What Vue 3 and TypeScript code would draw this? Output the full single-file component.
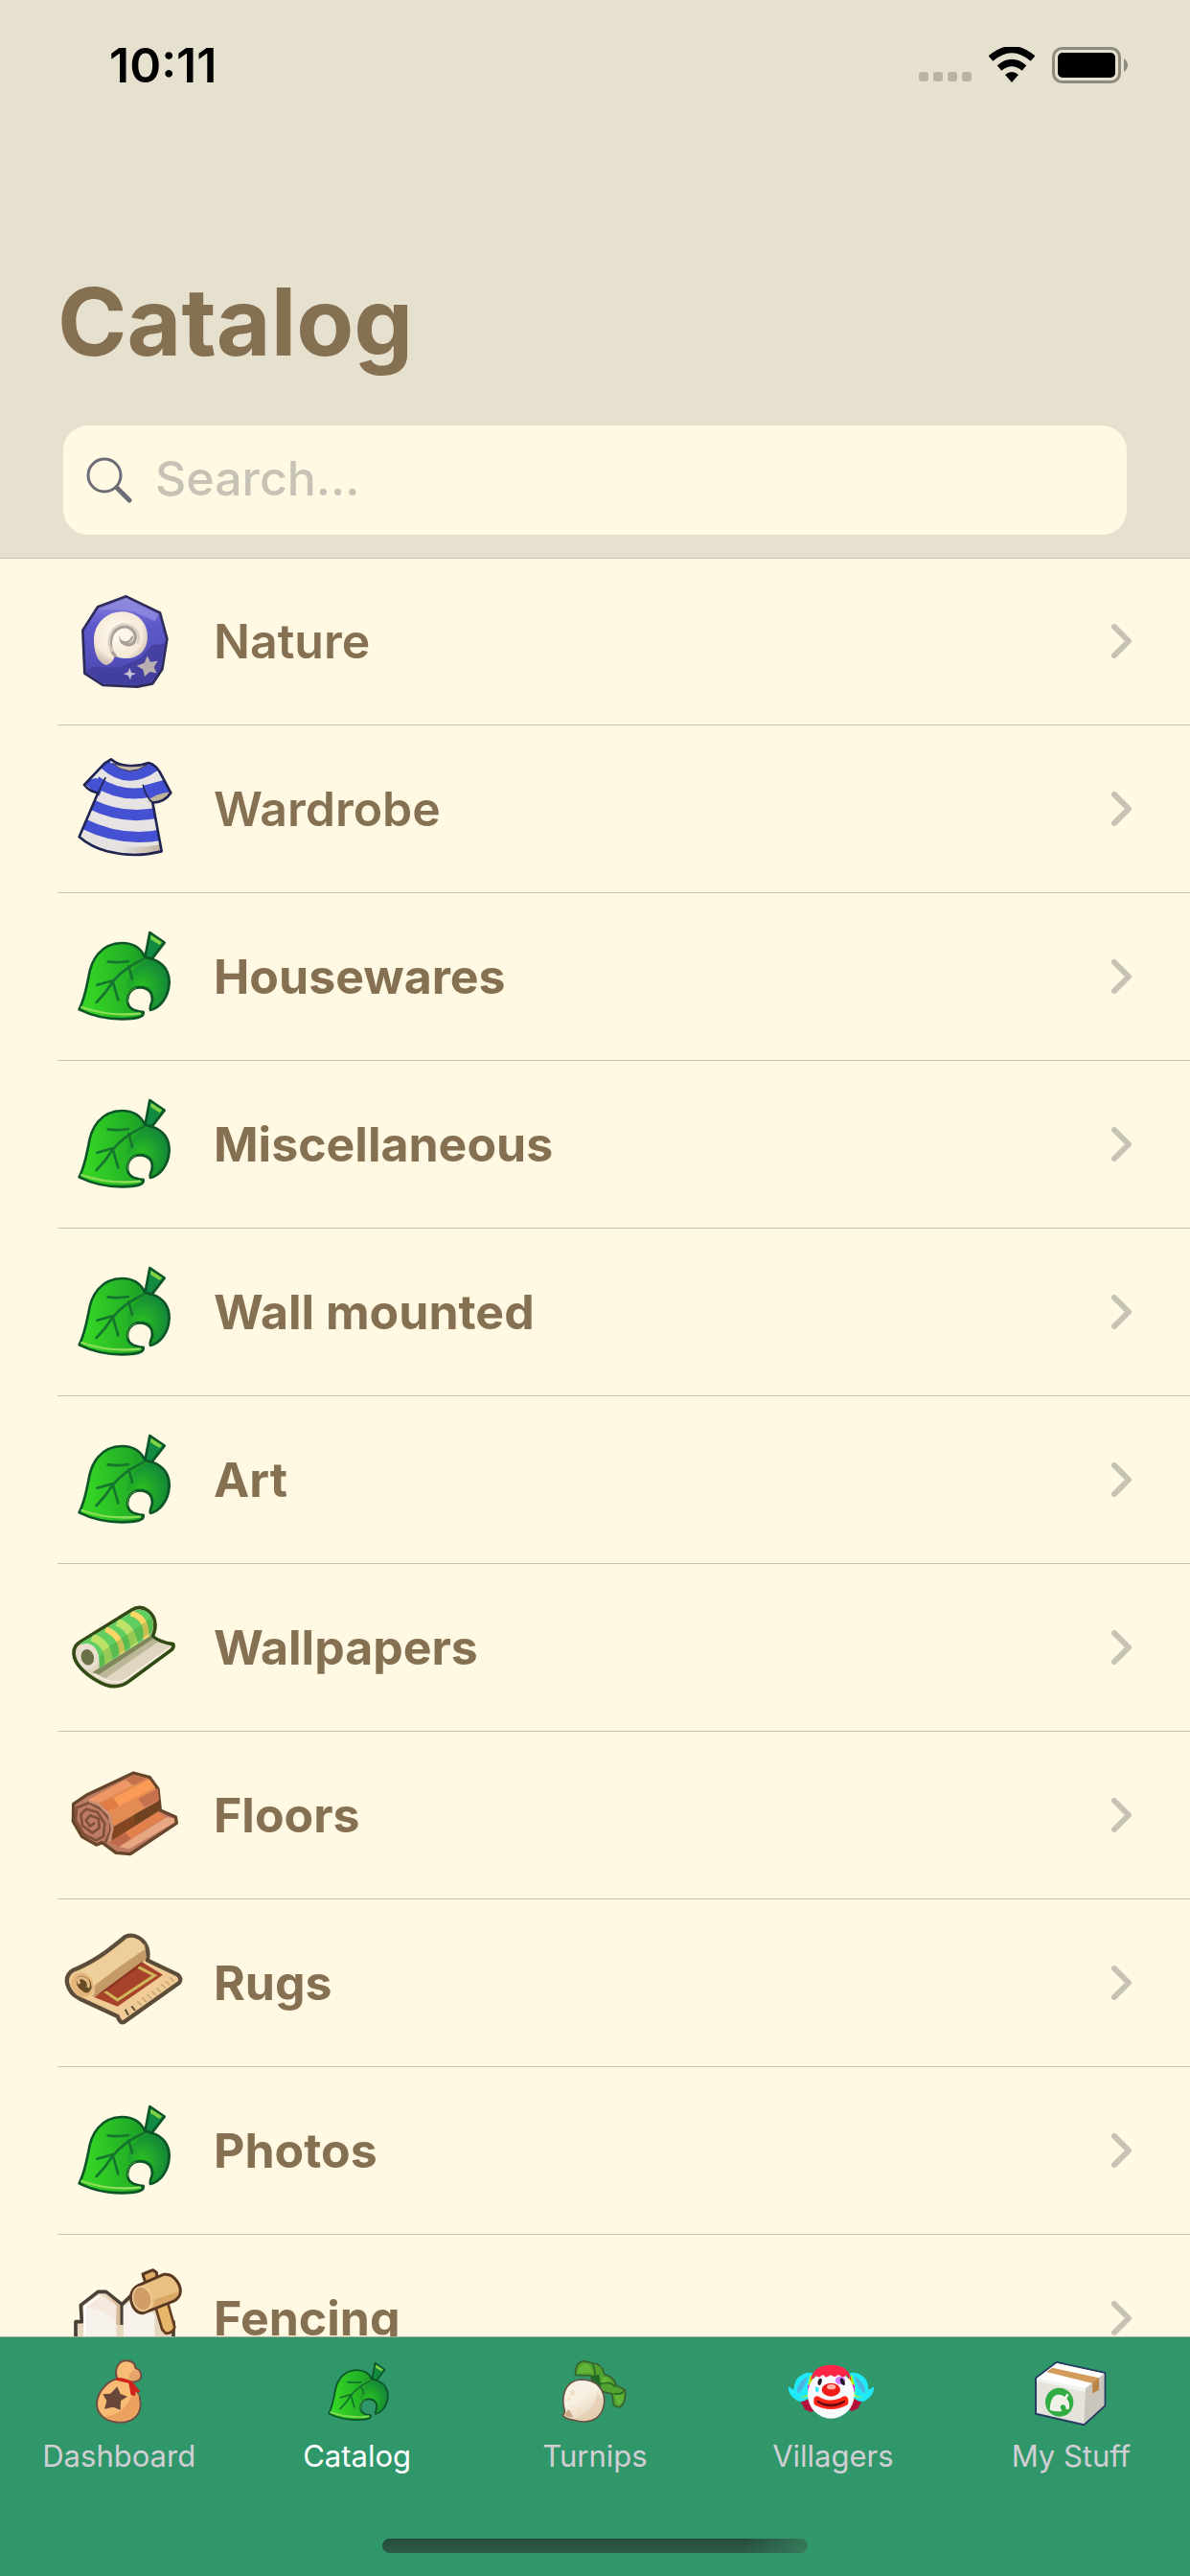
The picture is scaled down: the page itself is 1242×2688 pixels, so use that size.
<script setup lang="ts">
import { ref } from 'vue'

interface Category {
  name: string
  icon: string
  strong: boolean
}

interface Tab {
  name: string
  icon: string
}

const categories: Category[] = [
  { name: 'Nature', icon: 'fossil', strong: false },
  { name: 'Wardrobe', icon: 'dress', strong: false },
  { name: 'Housewares', icon: 'leaf', strong: true },
  { name: 'Miscellaneous', icon: 'leaf', strong: true },
  { name: 'Wall mounted', icon: 'leaf', strong: true },
  { name: 'Art', icon: 'leaf', strong: true },
  { name: 'Wallpapers', icon: 'wallpaper', strong: true },
  { name: 'Floors', icon: 'floor', strong: true },
  { name: 'Rugs', icon: 'rug', strong: true },
  { name: 'Photos', icon: 'leaf', strong: true },
  { name: 'Fencing', icon: 'fence', strong: true },
]

const tabs: Tab[] = [
  { name: 'Dashboard', icon: 'bag' },
  { name: 'Catalog', icon: 'leaf-small' },
  { name: 'Turnips', icon: 'turnip' },
  { name: 'Villagers', icon: 'clown' },
  { name: 'My Stuff', icon: 'box' },
]

const query = ref('')
const active = ref('Catalog')
</script>

<template>
  <div class="screen">
    <svg class="sprite" aria-hidden="true">
      <defs>
        <linearGradient id="g-fossil" x1="0" y1="0" x2="0" y2="1">
          <stop offset="0" stop-color="#8f8be0" />
          <stop offset="0.3" stop-color="#5f5acb" />
          <stop offset="1" stop-color="#4a46ad" />
        </linearGradient>
        <radialGradient id="g-shell" cx="0.45" cy="0.4" r="0.6">
          <stop offset="0" stop-color="#fffaf0" />
          <stop offset="0.75" stop-color="#f6ead8" />
          <stop offset="1" stop-color="#cfc0b4" />
        </radialGradient>
        <linearGradient id="g-leaf" x1="0.1" y1="0.5" x2="1" y2="0.4">
          <stop offset="0" stop-color="#35d325" />
          <stop offset="0.55" stop-color="#22ae26" />
          <stop offset="1" stop-color="#137a30" />
        </linearGradient>
        <radialGradient id="g-lobe" cx="0.35" cy="0.6" r="0.7">
          <stop offset="0" stop-color="#2cc320" />
          <stop offset="1" stop-color="#13853a" />
        </radialGradient>
        <linearGradient id="g-hem" x1="0" y1="0" x2="1" y2="0">
          <stop offset="0.5" stop-color="#e6e2df" />
          <stop offset="1" stop-color="#bcae98" />
        </linearGradient>
        <linearGradient id="g-turnip" x1="0.2" y1="0" x2="0.8" y2="1">
          <stop offset="0.4" stop-color="#f8f0e2" />
          <stop offset="1" stop-color="#e3cdb0" />
        </linearGradient>
        <clipPath id="c-dress">
          <path d="M228 607C255 632 310 632 345 618Q370 622 390 665L415 712Q395 742 358 743L386 895Q300 917 215 895Q165 882 128 850L187 712Q160 708 144 687L208 619Z" />
        </clipPath>
        <clipPath id="c-roll">
          <path d="M100 225L265 125Q300 110 320 135Q340 165 320 200L160 302Q170 240 100 225Z" />
        </clipPath>

        <g id="leaf-art">
          <path d="M304 178L319 99L365 131L326 181Z" fill="#128a41" stroke="#0c5527" stroke-width="8" stroke-linejoin="round" />
          <path d="M323 107L358 130L350 138L321 120Z" fill="#7ed344" />
          <path d="M98 340C115 305 120 275 127 240C135 185 165 133 232 132C270 132 292 150 304 176L325 182C362 192 381 222 380 258C377 305 350 335 321 342C318 335 321 328 325 318C332 290 315 271 288 271C262 271 245 294 250 320C256 343 278 345 299 348C301 359 290 366 270 368C205 375 145 363 98 340Z" fill="url(#g-leaf)" stroke="#0c5527" stroke-width="8" stroke-linejoin="round" />
          <path d="M262 225C285 195 305 188 326 187C357 197 375 224 375 257C373 290 355 320 332 332C341 300 330 262 285 264C270 265 260 268 252 276C242 258 255 240 262 225Z" fill="url(#g-lobe)" />
          <path d="M152 318Q180 290 202 255Q235 212 300 182M188 190Q220 195 252 189M154 263L202 250M204 255L220 310M253 205L264 245" fill="none" stroke="#15742d" stroke-width="8" stroke-linecap="round" />
          <path d="M106 333Q190 363 288 353" fill="none" stroke="#8ddd58" stroke-width="7" stroke-linecap="round" />
          <path d="M250 320Q244 284 276 272" fill="none" stroke="#74c44c" stroke-width="2" />
        </g>

        <symbol id="leaf" viewBox="39 39 396 396"><use href="#leaf-art" /></symbol>
        <symbol id="leaf-small" viewBox="15 77 439 329"><use href="#leaf-art" /></symbol>

        <symbol id="fossil" viewBox="69 39 396 396">
          <path d="M275 97L381 148L403 230L388 325L358 370L310 380L202 375L145 338L139 203L186 130Z" fill="url(#g-fossil)" stroke="#2d2b58" stroke-width="8" stroke-linejoin="round" />
          <path d="M275 104L375 152L366 175L300 145L245 138L190 138Z" fill="#8e8ade" opacity=".8" />
          <path d="M355 250L397 245L383 322L355 364L310 373L204 368L150 333L170 318L250 320L320 290Z" fill="#403c9a" opacity=".75" />
          <path d="M212 312C183 303 174 268 174 235C174 180 215 145 263 145C315 147 343 183 342 225C340 270 310 292 275 291C255 291 247 287 240 282Q233 309 212 312Z" fill="url(#g-shell)" />
          <path d="M240 282C218 260 220 208 258 193C292 185 313 215 300 240C285 256 258 248 258 225" fill="none" stroke="#aaa09a" stroke-width="10" stroke-linecap="round" />
          <path d="M232 270C212 245 220 195 262 184C300 182 325 215 310 246" fill="none" stroke="#dcd0c3" stroke-width="7" />
          <circle cx="272" cy="222" r="17" fill="#fbf5ea" />
          <path d="M262 238Q285 248 294 225" fill="none" stroke="#aaa09a" stroke-width="7" stroke-linecap="round" />
          <path d="M341 283L351 302L374 299L362 318L370 337L349 333L333 348L328 326L308 314L332 305Z" fill="#b9afb0" />
          <path d="M286 320L291 335L306 339L292 344L288 358L281 344L267 340L281 334Z" fill="#c9c2d0" />
        </symbol>

        <symbol id="dress" viewBox="69 564 396 396">
          <g clip-path="url(#c-dress)">
            <path d="M110 590H430V930H110Z" fill="#e7e3e2" />
            <path d="M120 830Q250 905 400 870V920H110Z" fill="url(#g-hem)" />
            <path d="M205 620Q280 690 365 628M180 675Q280 745 410 690M160 745Q270 800 380 773M140 808Q260 868 390 843" fill="none" stroke="#4551d3" stroke-width="33" />
            <path d="M140 678L180 665L205 690L190 722ZM327 690L392 672L425 705L350 730Z" fill="#4551d3" />
            <path d="M343 738Q365 712 415 710L395 738L358 748Z" fill="#c0b49d" />
          </g>
          <path d="M228 607C255 632 310 632 345 618Q370 622 390 665L415 712Q395 742 358 743L386 895Q300 917 215 895Q165 882 128 850L187 712Q160 708 144 687L208 619Z" fill="none" stroke="#202451" stroke-width="8" stroke-linejoin="round" />
          <path d="M232 620Q285 665 340 624Q285 637 232 620Z" fill="#c9bca8" stroke="#30305a" stroke-width="3" />
          <path d="M210 665L187 712M328 688Q335 722 358 743" fill="none" stroke="#202451" stroke-width="5" stroke-linecap="round" />
        </symbol>

        <symbol id="wallpaper" viewBox="39 39 396 396">
          <path d="M100 221L262 120C298 98 335 130 336 166Q336 188 327 202Q350 220 392 227Q396 234 388 244L258 340C225 366 190 364 155 342C120 322 82 290 81 256Q80 232 100 221Z" fill="#e1d6c1" stroke="#324b14" stroke-width="11" stroke-linejoin="round" />
          <path d="M140 315L325 207L345 220L180 334Z" fill="#bcb798" />
          <path d="M140 315L322 200L330 210L160 322Z" fill="#7f885b" />
          <path d="M145 321Q185 348 222 345Q245 340 265 322L382 238" fill="none" stroke="#f7efe0" stroke-width="5" />
          <g clip-path="url(#c-roll)">
            <path d="M90 100H350V310H90Z" fill="#61ce61" />
            <path d="M138 205Q196 225 190 300M217 158Q275 180 270 256" fill="none" stroke="#bce368" stroke-width="25" />
            <path d="M181 180Q241 205 231 278M260 130Q315 145 307 215" fill="none" stroke="#ffd666" stroke-width="18" />
            <path d="M148 310L345 175L330 140L170 250Z" fill="#438d2b" opacity=".3" />
          </g>
          <ellipse cx="125" cy="265" rx="33" ry="41" transform="rotate(-18 125 265)" fill="#e9dfcf" />
          <ellipse cx="124" cy="268" rx="20" ry="25" transform="rotate(-18 124 268)" fill="#6b7046" />
        </symbol>

        <symbol id="floor" viewBox="39 54 396 396">
          <path d="M80 217L120 190L268 120L319 134L345 170L352 237L400 258L403 277L258 374L213 370L170 338L152 345L107 320L79 272Z" fill="#bc7b62" stroke="#66452a" stroke-width="10" stroke-linejoin="round" />
          <path d="M125 205L268 126L314 138L338 170L348 205L203 288L190 250L165 220Z" fill="#e28b52" />
          <path d="M240 142L268 126L312 138L265 160ZM283 201L345 169L348 203L303 228Z" fill="#c5714d" />
          <path d="M205 199L318 140L336 165L222 224Z" fill="#fb9957" />
          <path d="M125 205L245 142L266 159L158 213Z" fill="#ed9866" />
          <path d="M160 216L205 198L222 224L184 240Z" fill="#df7b45" />
          <path d="M203 290L350 206L351 236L200 332Z" fill="#82451f" />
          <path d="M270 251L350 206L350 236L273 283Z" fill="#704220" />
          <path d="M193 337L345 242L369 258L223 352Z" fill="#e2814b" />
          <path d="M193 337L242 306L260 326L222 351Z" fill="#bd694a" />
          <path d="M223 352L372 258L395 263L397 275L255 358Z" fill="#e7a780" />
          <path d="M180 338L196 300V270L170 236L130 213L90 229L87 268L112 312L151 331L174 318L178 278L155 243L120 233L103 250L108 285L139 308L161 292L158 263L132 253L119 268L132 287L147 276" fill="none" stroke="#805039" stroke-width="8" stroke-linejoin="round" />
          <path d="M191 334L202 295L192 252L160 219L130 209" fill="none" stroke="#cb9178" stroke-width="8" />
        </symbol>

        <symbol id="rug" viewBox="39 579 396 396">
          <path d="M80 737C145 711 192 675 242 633C280 617 323 655 311 706L405 751Q422 764 410 778L238 900Q226 905 218 882L100 827C58 806 45 757 80 737Z" fill="#f1cb95" stroke="#5b4d38" stroke-width="13" stroke-linejoin="round" />
          <path d="M145 822L293 711L360 752L218 851Z" fill="#a7432b" />
          <path d="M170 798L218 831L334 754L270 721" fill="none" stroke="#d0b75a" stroke-width="9" />
          <path d="M137 820L302 705L280 732L180 804Z" fill="#8c3520" />
          <path d="M147 770Q225 700 303 654L309 700L145 822Z" fill="#c49b67" />
          <path d="M82 748C150 721 200 685 245 643C278 628 300 649 304 672L230 722L145 786Q128 742 82 748Z" fill="#eecf9b" />
          <ellipse cx="108" cy="784" rx="34" ry="40" transform="rotate(-28 108 784)" fill="#e5b77d" />
          <path d="M126 803Q105 811 91 784Q83 753 109 755Q137 762 137 791Q130 816 108 805" fill="#674d27" />
          <path d="M99 780Q86 758 111 762Q132 771 126 792" fill="none" stroke="#e6bb82" stroke-width="9" />
          <path d="M242 860L252 878M262 850L273 864" stroke="#5b4d38" stroke-width="6" />
          <path d="M280 835L294 848M295 823L309 838M310 813L324 827M325 803L339 816M340 793L354 806M355 782L369 794M369 772L382 784M383 761L395 774" stroke="#c9a87a" stroke-width="5" />
        </symbol>

        <symbol id="fence" viewBox="39 549 396 396">
          <path d="M87 960V758H106L103 706L157 664H182L232 704L263 674L350 720L360 758H393V960Z" fill="#e8d7bf" stroke="#4b4037" stroke-width="11" stroke-linejoin="round" />
          <path d="M111 708L163 672L215 708L213 960H111ZM237 708L270 688L334 735V960H237Z" fill="#f8f2ec" />
          <path d="M163 672L215 708L213 760Q165 710 111 715Z" fill="#f4e9dc" />
          <path d="M182 670L228 708V768H213L215 708Z" fill="#d8b999" />
          <path d="M231 704V768" stroke="#4b4037" stroke-width="9" />
          <path d="M116 960V710L161 678" fill="none" stroke="#fff" stroke-width="6" />
          <path d="M336 709L375 697L397 775Q392 793 370 795L358 783Z" fill="#e6b669" stroke="#663d20" stroke-width="8" stroke-linejoin="round" />
          <path d="M306 638L297 609L329 596L340 604L344 630Z" fill="#dfab67" stroke="#593921" stroke-width="9" stroke-linejoin="round" />
          <path d="M284 644L362 610C399 604 421 651 413 674Q405 692 382 698L299 731C272 732 259 703 260 678Q262 654 284 644Z" fill="#ebc183" stroke="#593921" stroke-width="9" stroke-linejoin="round" />
          <path d="M328 714L380 692Q405 686 408 664L335 688Z" fill="#daa865" />
          <ellipse cx="295" cy="686" rx="29" ry="38" transform="rotate(-15 295 686)" fill="#d19e69" stroke="#efcf9f" stroke-width="4" />
        </symbol>

        <symbol id="bag" viewBox="229 93 288 216">
          <path d="M368 157C356 122 375 100 396 100C414 100 424 110 426 124C442 128 448 149 437 160Q426 169 407 166Q438 193 441 237C440 274 412 293 377 293C330 292 304 268 304 235C306 193 341 163 368 157Z" fill="#f9bc75" stroke="#704c43" stroke-width="6" />
          <path d="M325 274Q390 276 421 193L435 207Q444 250 418 276Q368 302 325 274Z" fill="#eba15d" />
          <path d="M404 160Q405 132 425 129Q443 136 438 153Q427 166 404 160Z" fill="#e7a569" />
          <path d="M366 153Q388 152 415 165L441 198L426 197L424 210L411 208L404 170L364 161Z" fill="#cf231c" />
          <path d="M368 181L378 204L400 212L379 226L378 254L355 245L328 251L335 226L323 205L347 203Z" fill="#68463a" />
        </symbol>

        <symbol id="turnip" viewBox="369 93 288 216">
          <path d="M505 175L501 147L452 145Q449 106 479 101L506 108Q533 108 543 143Q573 151 579 177L608 192Q610 241 586 246L571 239L567 204L525 194Z" fill="#51a32f" stroke="#3a602d" stroke-width="5" stroke-linejoin="round" />
          <path d="M502 148L526 143L532 185L508 179Z" fill="#236827" />
          <path d="M505 110Q514 126 513 147M529 173Q560 162 577 183M572 203Q597 208 604 193" fill="none" stroke="#2c6825" stroke-width="5" />
          <path d="M458 139Q462 116 483 108Q503 116 506 138ZM536 151Q554 151 562 164L533 170ZM574 208L603 206Q600 235 586 240Z" fill="#62b637" />
          <path d="M418 256C407 219 414 163 469 159C520 159 544 192 542 230C538 270 514 291 477 291Q457 290 447 286Q420 283 411 270Q418 269 418 256Z" fill="url(#g-turnip)" stroke="#665344" stroke-width="5" />
          <path d="M418 271Q420 261 431 252L445 277Q429 280 418 271Z" fill="#cdab87" />
          <path d="M447 281Q509 263 521 201Q550 228 527 264Q501 296 447 281Z" fill="#e2c9aa" opacity=".55" />
          <g fill="#f1dec4"><circle cx="443" cy="200" r="8" /><circle cx="432" cy="220" r="5" /><circle cx="461" cy="253" r="7" /></g>
        </symbol>

        <symbol id="clown" viewBox="88 93 288 216">
          <path d="M160 218L132 227L145 253L166 262L185 245ZM296 218L323 227L311 250L292 259L275 245Z" fill="#b3133a" />
          <path d="M172 142Q154 131 132 147Q112 157 110 191L93 181Q92 210 122 226Q145 235 164 208ZM283 142Q301 131 324 147Q343 157 345 191L362 181Q362 210 333 226Q311 235 291 208Z" fill="#20eafa" />
          <path d="M120 190Q129 163 154 149Q149 178 124 204ZM335 190Q326 163 301 149Q306 178 331 204Z" fill="#4db3df" />
          <path d="M162 143L177 164L164 210L127 218L154 207L154 180ZM292 143L277 164L291 210L328 218L302 207V180Z" fill="#b6ef15" />
          <path d="M154 178L166 172V198L155 199ZM301 178L289 172V198L301 199Z" fill="#dc16e6" />
          <ellipse cx="227" cy="206" rx="73" ry="75" fill="#fafbff" />
          <path d="M163 163Q169 114 227 113Q285 114 291 163L275 145L264 153L251 144L238 151L226 145L212 152L201 144L190 152L179 147Z" fill="#ff2547" />
          <ellipse cx="256" cy="162" rx="16" ry="12" fill="#d77aff" />
          <g fill="#221922"><ellipse cx="192" cy="166" rx="6" ry="11" transform="rotate(15 192 166)" /><ellipse cx="263" cy="166" rx="6" ry="12" transform="rotate(-25 263 166)" /></g>
          <path d="M178 180L190 187L185 200L178 194Z" fill="#31eafa" />
          <ellipse cx="227" cy="191" rx="29" ry="21" fill="#f01c16" />
          <ellipse cx="228" cy="182" rx="14" ry="8" fill="#ffb4ae" />
          <path d="M184 222Q226 248 270 222V230Q227 252 184 230Z" fill="#ff2519" stroke="#ff2519" stroke-width="22" stroke-linejoin="round" />
          <path d="M182 223Q227 248 271 223L270 230Q227 258 183 230Z" fill="#650c12" />
        </symbol>

        <symbol id="box" viewBox="833 93 288 216">
          <path d="M866 155L931 105L1083 138V241L1017 301L866 266Z" fill="#e5e3dc" stroke="#273c62" stroke-width="6" stroke-linejoin="round" />
          <path d="M869 155L932 108L1080 140L1022 187Z" fill="#fff" />
          <path d="M1022 187L1080 140V239L1017 297Z" fill="#cac6bd" />
          <path d="M869 155L1022 187L1019 197L869 164Z" fill="#f2f2ee" />
          <path d="M900 135L918 122L1064 154V191L1044 202V171Z" fill="#d29b5b" />
          <path d="M1044 171L1064 154V191L1044 202Z" fill="#b98447" />
          <ellipse cx="940" cy="230" rx="44" ry="45" transform="rotate(-12 940 230)" fill="#31ac42" />
          <path d="M910 254Q912 204 940 206Q951 207 957 213L963 203L970 206L963 218Q975 232 970 252L961 253Q961 240 952 238Q941 239 944 249L948 258Q926 261 910 254Z" fill="#f0f1e9" />
        </symbol>
      </defs>
    </svg>

    <header class="header">
      <div class="status">
        <span class="time">10:11</span>
        <div class="signals">
          <svg class="dots" viewBox="0 0 55 10" aria-hidden="true">
            <rect v-for="n in 4" :key="n" :x="(n - 1) * 15" width="10" height="10" rx="3" fill="#b8b3a4" />
          </svg>
          <svg class="wifi" viewBox="0 0 48 38" aria-hidden="true">
            <path d="M2 12Q24-7 46 12M11 22Q24 11 37 22" fill="none" stroke="#000" stroke-width="7" />
            <path d="M17 29Q24 23 31 29L24 37Z" />
          </svg>
          <svg class="battery" viewBox="0 0 80 38" aria-hidden="true">
            <rect x="1.5" y="1.5" width="69" height="35" rx="9" fill="none" stroke="#8e8a7e" stroke-width="3" />
            <rect x="6" y="6" width="60" height="26" rx="5" />
            <path d="M75 12Q79 15 79 19T75 26Z" fill="#8e8a7e" />
          </svg>
        </div>
      </div>
      <h1 class="title">Catalog</h1>
      <label class="search">
        <svg class="glass" viewBox="0 0 48 48" aria-label="Search">
          <circle cx="19" cy="19" r="17" fill="none" stroke="#6c6c74" stroke-width="3" />
          <path d="M32 32L45 45" stroke="#6c6c74" stroke-width="5" stroke-linecap="round" />
        </svg>
        <input v-model="query" class="field" type="text" placeholder="Search..." />
      </label>
    </header>

    <main class="list">
      <a v-for="item in categories" :key="item.name" class="row" href="#">
        <svg class="icon" aria-hidden="true"><use :href="'#' + item.icon" /></svg>
        <span class="name" :class="{ strong: item.strong }">{{ item.name }}</span>
        <svg class="chevron" viewBox="0 0 22 36" aria-hidden="true">
          <path d="M3 3L18 18L3 33" fill="none" stroke="#c6c2b4" stroke-width="6" stroke-linecap="round" stroke-linejoin="round" />
        </svg>
      </a>
    </main>

    <nav class="tabbar">
      <div class="tabs">
        <button
          v-for="tab in tabs"
          :key="tab.name"
          type="button"
          class="tab"
          :class="{ active: tab.name === active }"
          @click="active = tab.name"
        >
          <svg class="tab-icon" aria-hidden="true"><use :href="'#' + tab.icon" /></svg>
          <span>{{ tab.name }}</span>
        </button>
      </div>
      <div class="home"></div>
    </nav>
  </div>
</template>

<style>
body {
  background: #fff8e3;
}
</style>

<style scoped>
.screen {
  display: flex;
  flex-direction: column;
  height: 100vh;
  overflow: hidden;
  background: #fff8e3;
  color: #857052;
  font-family: Inter, "Liberation Sans", sans-serif;
}

.sprite {
  position: absolute;
  width: 0;
  height: 0;
}

.header {
  flex: none;
  position: relative;
  padding-bottom: 24px;
  background: #e6e0cf;
  box-shadow: 0 1px 0 #c6c2b4;
}

.status {
  display: flex;
  align-items: center;
  justify-content: space-between;
  height: 136px;
  padding: 0 64px 0 114px;
  color: #000;
}

.time {
  font-size: 50px;
  font-weight: 600;
}

.signals {
  display: flex;
  align-items: flex-end;
  gap: 18px;
}

.dots {
  width: 55px;
  height: 10px;
  padding-bottom: 2px;
}

.wifi {
  width: 48px;
  height: 38px;
}

.battery {
  width: 80px;
  height: 38px;
}

.title {
  margin: 140px 60px 48px;
  font-size: 98px;
  font-weight: 700;
  line-height: 120px;
}

.search {
  display: flex;
  align-items: center;
  gap: 24px;
  height: 114px;
  margin: 0 66px;
  padding: 0 24px;
  border-radius: 26px;
  background: #fff8e3;
  box-sizing: border-box;
}

.glass {
  flex: none;
  width: 48px;
  height: 48px;
}

.field {
  flex: 1;
  min-width: 0;
  padding: 0 0 4px;
  border: 0;
  outline: 0;
  background: transparent;
  color: #857052;
  font: 500 50px Inter, "Liberation Sans", sans-serif;
}

.field::placeholder {
  color: #c6c2b5;
  opacity: 1;
}

.list {
  flex: 1;
  min-height: 0;
  overflow: hidden;
}

.row {
  display: flex;
  align-items: center;
  height: 174px;
  margin-left: 60px;
  padding: 0 60px 0 3px;
  border-bottom: 1px solid #c6c2b4;
  color: inherit;
  text-decoration: none;
}

.icon {
  flex: none;
  width: 132px;
  height: 132px;
}

.name {
  flex: 1;
  margin-left: 28px;
  font-size: 50px;
  font-weight: 600;
}

.strong {
  font-weight: 700;
}

.chevron {
  flex: none;
  width: 22px;
  height: 36px;
}

.tabbar {
  flex: none;
  position: relative;
  padding: 22px 0 24px;
  background: #30976b;
  box-shadow: 0 -1px 0 #a8a898;
}

.tabs {
  display: flex;
}

.tab {
  flex: 1 1 0;
  display: flex;
  flex-direction: column;
  align-items: center;
  gap: 12px;
  padding: 0;
  border: 0;
  background: none;
  color: #d1cfd4;
  font: 400 31px/36px Inter, "Liberation Sans", sans-serif;
}

.active {
  color: #fff;
}

.tab-icon {
  width: 96px;
  height: 72px;
}

.home {
  width: 444px;
  height: 15px;
  margin: 68px auto 0;
  border-radius: 8px;
  background:
    linear-gradient(100deg, transparent 85%, #357a5b 100%),
    linear-gradient(#264b3a, #2c5c48);
}
</style>
